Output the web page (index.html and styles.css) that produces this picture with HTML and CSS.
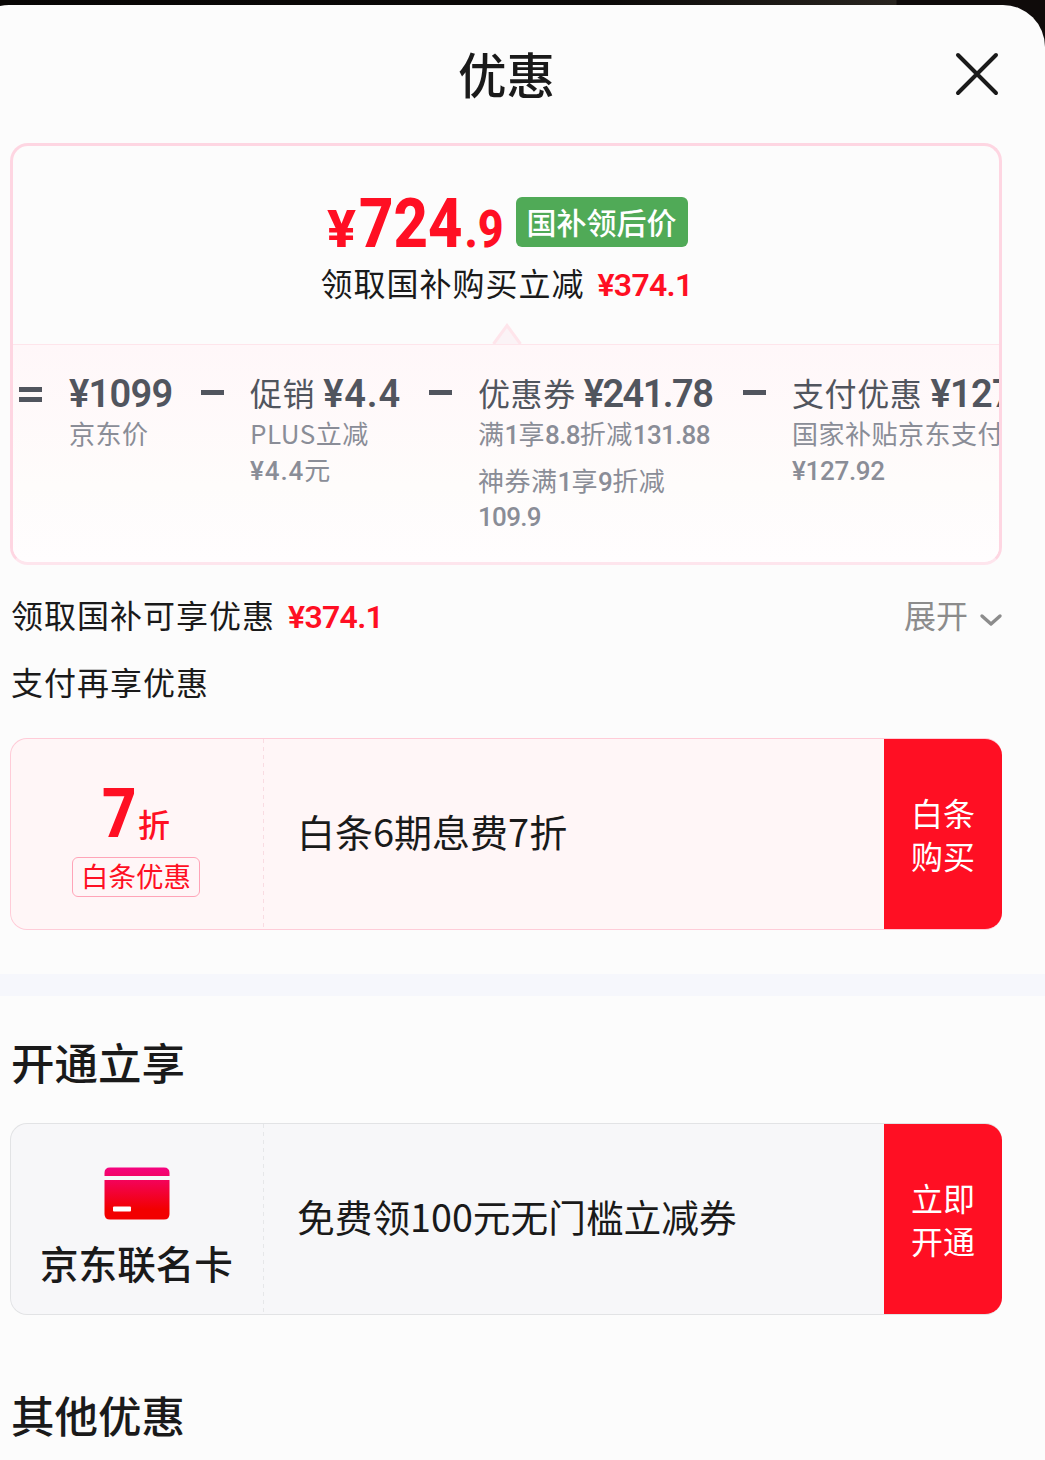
FILE: index.html
```html
<!DOCTYPE html>
<html lang="zh-CN">
<head>
    <meta charset="UTF-8">
    <meta name="viewport" content="width=device-width, initial-scale=1.0">
    <title>优惠</title>
    <link rel="stylesheet" href="styles.css">
</head>
<body>

    <div class="sheet">
        <header class="sheet-header">
            <h1>优惠</h1>
            <button class="close-button" aria-label="关闭">
                <svg width="46" height="46" viewBox="0 0 46 46">
                    <path d="M4 4L42 42M42 4L4 42" fill="none" stroke="#1a1a1a" stroke-width="4" stroke-linecap="round"/>
                </svg>
            </button>
        </header>

        <section class="price-card">
            <div class="price-top">
                <div class="final-price">
                    <span class="price"><span class="small yen">¥</span><span class="big">724</span><span class="small cents">.9</span></span>
                    <span class="badge">国补领后价</span>
                </div>
                <div class="price-note">领取国补购买立减<span class="amount">¥374.1</span></div>
                <svg class="arrow" width="30" height="21" viewBox="0 0 30 21">
                    <path d="M1.5 21L15 2.5L28.5 21" fill="#fbf3f6" stroke="#fee5eb" stroke-width="3"/>
                </svg>
            </div>
            <div class="formula">
                <span class="op equal"></span>
                <div class="item origin">
                    <div class="item-title"><b>¥1099</b></div>
                    <p>京东价</p>
                </div>
                <span class="op"></span>
                <div class="item promo">
                    <div class="item-title">促销<b>¥4.4</b></div>
                    <p>PLUS立减<br><i>¥4.4</i>元</p>
                </div>
                <span class="op"></span>
                <div class="item coupon-sum">
                    <div class="item-title">优惠券<b>¥241.78</b></div>
                    <p>满<i>1</i>享<i>8.8</i>折减<i>131.88</i></p>
                    <p>神券满<i>1</i>享<i>9</i>折减<br><i>109.9</i></p>
                </div>
                <span class="op"></span>
                <div class="item pay">
                    <div class="item-title">支付优惠<b>¥127.92</b></div>
                    <p>国家补贴京东支付<br><i>¥127.92</i></p>
                </div>
            </div>
        </section>

        <div class="line-row">
            <div>领取国补可享优惠<span class="amount">¥374.1</span></div>
            <div class="expand">展开
                <svg width="24" height="16" viewBox="0 0 24 16">
                    <path d="M3 4L12 12L21 4" fill="none" stroke="#8c8c8c" stroke-width="3.4" stroke-linecap="round" stroke-linejoin="round"/>
                </svg>
            </div>
        </div>
        <div class="line-row pay-row">支付再享优惠</div>

        <div class="coupon pink">
            <div class="coupon-left">
                <div class="discount"><span class="num">7</span><span class="unit">折</span></div>
                <span class="tag">白条优惠</span>
            </div>
            <div class="coupon-body">白条6期息费7折</div>
            <button class="coupon-button">白条<br>购买</button>
        </div>

        <div class="divider"></div>

        <h2>开通立享</h2>
        <div class="coupon gray">
            <div class="coupon-left">
                <svg class="card-icon" width="66" height="53" viewBox="0 0 66 53">
                    <defs>
                        <linearGradient id="cardFill" x1="0" y1="0" x2="0" y2="53" gradientUnits="userSpaceOnUse">
                            <stop offset="0" stop-color="#f40482"/>
                            <stop offset="0.8" stop-color="#f20000"/>
                        </linearGradient>
                    </defs>
                    <path d="M0.5 9V6Q0.5 0.5 6 0.5H60Q65.5 0.5 65.5 6V9Z" fill="url(#cardFill)"/>
                    <path d="M0.5 13H65.5V47Q65.5 52.5 60 52.5H6Q0.5 52.5 0.5 47Z" fill="url(#cardFill)"/>
                    <rect x="9" y="39.5" width="18" height="5" rx="1" fill="#fff"/>
                </svg>
                <strong>京东联名卡</strong>
            </div>
            <div class="coupon-body card-body">免费领100元无门槛立减券</div>
            <button class="coupon-button">立即<br>开通</button>
        </div>

        <h2 class="other">其他优惠</h2>
    </div>

</body>
</html>
```
FILE: styles.css
```css
* {
    box-sizing: border-box;
}
body {
    margin: 0;
    padding-top: 5px;
    height: 1460px;
    overflow: hidden;
    background: linear-gradient(to right, #080605 0, #0c0a09 600px, #28241f 896px, #0f0b0a 897px);
    font-family: "Noto Sans CJK SC", sans-serif;
    font-size: 32px;
    color: #1a1a1a;
}
h1, h2, p {
    margin: 0;
}
button {
    border: none;
    padding: 0;
    font-family: inherit;
    cursor: pointer;
}
svg {
    display: block;
}
/* the sheet starts a little left of the viewport */
.sheet {
    margin-left: -33px;
    padding: 0 43px;
    height: 1455px;
    background: #fcfcfc;
    border-radius: 42px 42px 0 0;
}
.sheet-header {
    display: grid;
    grid-template-columns: 48px 1fr 48px;
    align-items: center;
    height: 138px;
}
.sheet-header h1 {
    grid-column: 2;
    padding-left: 1px;
    font-size: 48.5px;
    font-weight: 500;
    line-height: 137px;
    height: 138px;
    text-align: center;
}
.close-button {
    background: none;
}

/* price card */
.price-card {
    height: 422px;
    border: 3px solid #fed6e2;
    border-bottom-color: #fee5ed;
    border-radius: 18px;
    overflow: hidden;
}
.price-top {
    display: flex;
    flex-direction: column;
    align-items: center;
    height: 198px;
    padding: 51px 0 0 1px;
}
.final-price {
    display: flex;
    height: 50px;
    padding-left: 1px;
}
.price {
    display: flex;
    align-items: baseline;
    width: 189px;
    transform: scaleX(0.88);
    transform-origin: left;
    color: #ff0f23;
    font-family: Roboto, sans-serif;
    font-weight: 800;
    line-height: 54px;
}
.price .small {
    font-size: 51px;
}
.price .yen {
    margin-right: 9px;
    transform: scaleX(1.2);
    transform-origin: left;
}
.price .cents {
    margin-left: 2px;
}
.price .big {
    font-size: 68px;
}
.badge {
    width: 172px;
    border-radius: 6px;
    background: #50aa57;
    color: #fff;
    font-size: 30px;
    font-weight: 500;
    line-height: 48px;
    text-align: center;
}
.price-note {
    margin-top: 12px;
    line-height: 46px;
    letter-spacing: 1px;
}
.amount {
    margin-left: 13px;
    color: #ff0f23;
    font-family: Roboto, sans-serif;
    font-weight: 600;
    line-height: 1;
    letter-spacing: -0.7px;
}
.arrow {
    margin-top: auto;
}
.formula {
    display: flex;
    height: 219px;
    padding: 26px 0 0 6px;
    border-top: 1px solid #fee5eb;
    background: linear-gradient(#fff7f9, #fefcfb 65%, #fffdfe);
    color: #51555e;
}
.op {
    flex: none;
    width: 23px;
    height: 5px;
    margin: 19px 26px 0 28px;
    background: #51555e;
}
.op.equal {
    height: 15px;
    margin: 16px 27px 0 0;
    border: solid #51555e;
    border-width: 5px 0;
    background: none;
}
.item {
    flex: none;
}
.origin {
    width: 104px;
}
.promo {
    width: 151px;
}
.coupon-sum {
    width: 237px;
}
.item-title {
    height: 44px;
    line-height: 42px;
    white-space: nowrap;
    letter-spacing: 0.6px;
}
.item-title b {
    margin-left: 8px;
    font-family: Roboto, sans-serif;
    font-size: 38px;
    font-weight: 600;
    line-height: 1;
    letter-spacing: -0.7px;
    vertical-align: -1px;
}
.origin b {
    margin-left: 0;
}
.promo b {
    letter-spacing: 0.8px;
}
.coupon-sum b {
    letter-spacing: -1.6px;
}
.item p {
    margin-bottom: 11px;
    color: #8a8d97;
    font-size: 26px;
    line-height: 35.5px;
    letter-spacing: 0.5px;
    white-space: nowrap;
}
.item i {
    font-family: Roboto, sans-serif;
    font-style: normal;
    font-weight: 500;
    line-height: 1;
    letter-spacing: -0.7px;
}
.promo i {
    letter-spacing: 0.9px;
}
.pay i {
    letter-spacing: -0.3px;
}

/* text rows */
.line-row {
    display: flex;
    justify-content: space-between;
    height: 46px;
    margin-top: 26px;
    padding-left: 1px;
    line-height: 46px;
    letter-spacing: 1px;
}
.line-row.pay-row {
    margin-top: 21px;
}
.expand {
    display: flex;
    align-items: center;
    gap: 11px;
    margin-right: -1px;
    color: #8c8c8c;
    letter-spacing: 0;
}
.expand svg {
    margin-top: 11px;
}

/* coupons */
.coupon {
    display: flex;
    height: 192px;
    border: 1px solid #ffccd8;
    border-right: none;
    border-radius: 17px;
    overflow: hidden;
}
.pink {
    margin-top: 34px;
    background: #fff6f7;
}
.gray {
    border-color: #e2e3e5;
    background: #f7f7f9;
}
.coupon-left {
    display: flex;
    flex-direction: column;
    align-items: center;
    width: 253px;
    padding-right: 3px;
    background: repeating-linear-gradient(#f9dce2 0 4px, transparent 4px 8px) right / 1px 100% no-repeat;
}
.gray .coupon-left {
    padding-right: 2px;
    background-image: repeating-linear-gradient(#e6e7e9 0 4px, transparent 4px 8px);
}
.discount {
    display: flex;
    align-items: baseline;
    height: 118px;
    color: #ff0f23;
}
.discount .num {
    margin-right: -3px;
    transform: scaleX(0.88);
    transform-origin: left;
    font-family: Roboto, sans-serif;
    font-size: 68px;
    font-weight: 800;
    line-height: 150px;
}
.discount .unit {
    font-size: 32px;
    font-weight: 500;
}
.tag {
    width: 128px;
    height: 40px;
    border: 1px solid #ffa5b8;
    border-radius: 6px;
    color: #ff0f23;
    font-size: 27.5px;
    line-height: 35px;
    text-align: center;
}
.coupon-body {
    flex: 1;
    padding-left: 33px;
    font-size: 38px;
    line-height: 184px;
}
.card-body {
    font-size: 37.7px;
}
.coupon-button {
    width: 118px;
    background: #ff0f23;
    color: #fff;
    font-size: 32px;
    line-height: 43px;
}
.card-icon {
    margin-top: 43px;
}
.coupon-left strong {
    margin-top: 15px;
    font-size: 38.6px;
    font-weight: 500;
    line-height: 54px;
}
.divider {
    height: 22px;
    margin: 44px -43px 0;
    background: #f6f7fc;
}
h2 {
    height: 58px;
    margin: 37px 0 32px 1px;
    font-size: 43.5px;
    font-weight: 500;
    line-height: 57px;
}
h2.other {
    margin-top: 71px;
}
```
